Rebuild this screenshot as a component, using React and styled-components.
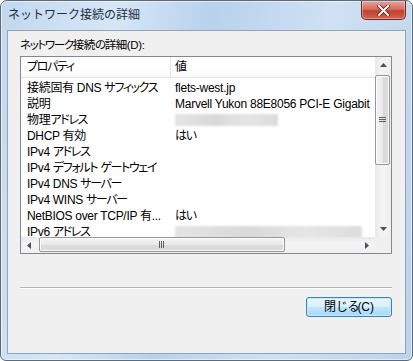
import React from "react";
import styled, { createGlobalStyle } from "styled-components";

const GlobalStyle = createGlobalStyle`
  html, body {
    margin: 0;
    padding: 0;
    background: #ffffff;
  }
  body {
    font-family: "Liberation Sans", "Noto Sans CJK JP", sans-serif;
  }
`;

const Window = styled.div`
  box-sizing: border-box;
  width: 413px;
  height: 361px;
  display: flex;
  flex-direction: column;
  padding: 0 6px 6px 6px;
  border: 1px solid #5b6b7c;
  border-radius: 7px 7px 6px 6px;
  background: linear-gradient(
    100deg,
    #c3d8ee 0%,
    #d6e6f6 25%,
    #b9d1ec 45%,
    #cfe1f3 70%,
    #bcd3ec 100%
  );
  box-shadow: inset 0 0 0 1px rgba(255, 255, 255, 0.55);
`;

const TitleBar = styled.div`
  height: 29px;
  display: flex;
  align-items: flex-start;
  justify-content: space-between;
`;

const Title = styled.div`
  margin: 5px 0 0 1px;
  font-family: "Noto Sans CJK JP", sans-serif;
  font-size: 12px;
  line-height: 16px;
  color: #1d2f45;
`;

const CloseButton = styled.div`
  box-sizing: border-box;
  width: 45px;
  height: 19px;
  display: flex;
  align-items: center;
  justify-content: center;
  border: 1px solid #6e2a28;
  border-top: none;
  border-radius: 0 0 5px 5px;
  background: linear-gradient(180deg, #e3a49b 0%, #d2705f 45%, #c2412f 55%, #d0644f 100%);
  box-shadow: inset 0 0 0 1px rgba(255, 255, 255, 0.35);
`;

const Client = styled.div`
  flex: 1;
  display: flex;
  flex-direction: column;
  background: #f0f0f0;
  border: 1px solid #8fa5bd;
  padding: 6px 13px 0 12px;
`;

const Label = styled.div`
  font-size: 11.5px;
  line-height: 16px;
  letter-spacing: -0.4px;
  color: #000;
`;

// katakana / hiragana runs are narrower in the original UI font
const Kana = styled.span`
  letter-spacing: -1.35px;
  font-feature-settings: "palt";
`;

const ListBox = styled.div`
  box-sizing: border-box;
  margin-top: 3px;
  height: 198px;
  border: 1px solid #828790;
  background: #fff;
  display: grid;
  grid-template-columns: 1fr 16px;
  grid-template-rows: 1fr 16px;
`;

const Content = styled.div`
  overflow: hidden;
`;

const Header = styled.div`
  height: 20px;
  display: grid;
  grid-template-columns: 150px 1fr;
  border-bottom: 1px solid #e5e5e5;
  background: linear-gradient(180deg, #ffffff 0%, #ffffff 60%, #f7f8fa 100%);
`;

const HeaderCell = styled.div`
  font-size: 12px;
  line-height: 20px;
  padding-left: ${(p) => p.$pad}px;
  border-right: ${(p) => (p.$divider ? "1px solid #e3e8ee" : "none")};
  color: #000;
`;

const Rows = styled.div`
  padding-top: 2px;
`;

const Row = styled.div`
  height: 16px;
  display: grid;
  grid-template-columns: 150px 1fr;
  font-size: 12px;
  line-height: 16px;
  color: #000;
`;

const NameCell = styled.div`
  padding: 0 3px 0 6px;
  letter-spacing: -0.3px;
  white-space: nowrap;
  overflow: hidden;
  text-overflow: ellipsis;
`;

const ValueCell = styled.div`
  padding-left: 4px;
  letter-spacing: -0.25px;
  white-space: nowrap;
  overflow: hidden;
  display: flex;
  align-items: center;
`;

const Blur = styled.div`
  width: ${(p) => p.$w}px;
  height: 12px;
  background: linear-gradient(90deg, #e4e4e4, #d9d9d9 40%, #e6e6e6 70%, #dcdcdc);
  filter: blur(1px);
`;

const VScroll = styled.div`
  display: flex;
  flex-direction: column;
  background: linear-gradient(90deg, #e8e8e8 0%, #f4f4f4 40%, #f0f0f0 100%);
`;

const HScroll = styled.div`
  display: flex;
  align-items: stretch;
  background: linear-gradient(180deg, #e8e8e8 0%, #f4f4f4 40%, #f0f0f0 100%);
`;

const Corner = styled.div`
  background: #f0f0f0;
`;

const Arrow = styled.div`
  width: 16px;
  height: 16px;
  flex: none;
  display: flex;
  align-items: center;
  justify-content: center;
`;

const Track = styled.div`
  flex: 1;
  display: flex;
  flex-direction: ${(p) => (p.$vertical ? "column" : "row")};
  padding: ${(p) => (p.$vertical ? "2px 0 0 0" : "0 0 0 2px")};
`;

const Thumb = styled.div`
  box-sizing: border-box;
  ${(p) => (p.$vertical ? `height: ${p.$size}px; width: 15px;` : `width: ${p.$size}px; height: 15px;`)}
  border: 1px solid #979797;
  border-radius: 2px;
  display: flex;
  align-items: center;
  justify-content: center;
  background: ${(p) =>
    p.$vertical
      ? "linear-gradient(90deg, #f3f3f3 0%, #e9e9e9 50%, #d8d8d8 51%, #dcdcdc 100%)"
      : "linear-gradient(180deg, #f3f3f3 0%, #e9e9e9 50%, #d8d8d8 51%, #dcdcdc 100%)"};
  box-shadow: inset 0 0 0 1px rgba(255, 255, 255, 0.8);
`;

const Separator = styled.div`
  margin-top: 33px;
  height: 0;
  border-top: 1px solid #b4b4b4;
  border-bottom: 1px solid #ffffff;
`;

const ButtonRow = styled.div`
  margin-top: 8px;
  display: flex;
  justify-content: flex-end;
`;

const Button = styled.button`
  box-sizing: border-box;
  width: 86px;
  height: 20px;
  padding: 0;
  border: 1px solid #3c7fb1;
  border-radius: 3px;
  font-family: "Liberation Sans", "Noto Sans CJK JP", sans-serif;
  font-size: 12px;
  line-height: 16px;
  color: #000;
  background: linear-gradient(180deg, #eaf6fd 0%, #d9f0fc 50%, #bee6fd 51%, #a7d9f5 100%);
  box-shadow: inset 0 0 0 1px #c6ecfb;
`;

// the NetBIOS name is shown truncated, as the column cuts it in the original
const rows = [
  { name: "接続固有 DNS サフィックス", value: "flets-west.jp" },
  { name: "説明", value: "Marvell Yukon 88E8056 PCI-E Gigabit" },
  { name: "物理アドレス", blur: 103 },
  { name: "DHCP 有効", value: "はい" },
  { name: "IPv4 アドレス" },
  { name: "IPv4 デフォルト ゲートウェイ" },
  { name: "IPv4 DNS サーバー" },
  { name: "IPv4 WINS サーバー" },
  { name: "NetBIOS over TCP/IP 有...", value: "はい" },
  { name: "IPv6 アドレス", blur: 187 },
];

function JText({ text }) {
  const parts = text.split(/([\u3040-\u30ff]+)/);
  return parts.map((p, i) =>
    /[\u3040-\u30ff]/.test(p) ? <Kana key={i}>{p}</Kana> : <React.Fragment key={i}>{p}</React.Fragment>
  );
}

function Tri({ dir }) {
  const pts = {
    up: "0,4 7,4 3.5,0",
    down: "0,0 7,0 3.5,4",
    left: "4,0 4,7 0,3.5",
    right: "0,0 0,7 4,3.5",
  }[dir];
  const vert = dir === "up" || dir === "down";
  return (
    <svg width={vert ? 7 : 4} height={vert ? 4 : 7} viewBox={vert ? "0 0 7 4" : "0 0 4 7"}>
      <polygon points={pts} fill="#4d5056" />
    </svg>
  );
}

function Grip({ vertical }) {
  return vertical ? (
    <svg width="7" height="6" viewBox="0 0 7 6">
      <rect x="0" y="0" width="7" height="1" fill="#5f5f5f" />
      <rect x="0" y="2" width="7" height="1" fill="#5f5f5f" />
      <rect x="0" y="4" width="7" height="1" fill="#5f5f5f" />
    </svg>
  ) : (
    <svg width="6" height="7" viewBox="0 0 6 7">
      <rect x="0" y="0" width="1" height="7" fill="#5f5f5f" />
      <rect x="2" y="0" width="1" height="7" fill="#5f5f5f" />
      <rect x="4" y="0" width="1" height="7" fill="#5f5f5f" />
    </svg>
  );
}

export default function App() {
  return (
    <>
      <GlobalStyle />
      <Window>
        <TitleBar>
          <Title>ネットワーク接続の詳細</Title>
          <CloseButton>
            <svg width="13" height="11" viewBox="0 0 13 11">
              <path
                d="M2 1 L11 10 M11 1 L2 10"
                stroke="#5a1f1a"
                strokeWidth="3.6"
                strokeLinecap="square"
              />
              <path
                d="M2 1 L11 10 M11 1 L2 10"
                stroke="#ffffff"
                strokeWidth="2"
                strokeLinecap="square"
              />
            </svg>
          </CloseButton>
        </TitleBar>
        <Client>
          <Label>
            <JText text="ネットワーク接続の詳細(D):" />
          </Label>
          <ListBox>
            <Content>
              <Header>
                <HeaderCell $pad={6} $divider>
                  <JText text="プロパティ" />
                </HeaderCell>
                <HeaderCell $pad={4}>値</HeaderCell>
              </Header>
              <Rows>
                {rows.map((r) => (
                  <Row key={r.name}>
                    <NameCell>
                      <JText text={r.name} />
                    </NameCell>
                    <ValueCell>
                      {r.blur ? <Blur $w={r.blur} /> : <JText text={r.value || ""} />}
                    </ValueCell>
                  </Row>
                ))}
              </Rows>
            </Content>
            <VScroll>
              <Arrow>
                <Tri dir="up" />
              </Arrow>
              <Track $vertical>
                <Thumb $vertical $size={90}>
                  <Grip vertical />
                </Thumb>
              </Track>
              <Arrow>
                <Tri dir="down" />
              </Arrow>
            </VScroll>
            <HScroll>
              <Arrow>
                <Tri dir="left" />
              </Arrow>
              <Track>
                <Thumb $size={246}>
                  <Grip />
                </Thumb>
              </Track>
              <Arrow>
                <Tri dir="right" />
              </Arrow>
            </HScroll>
            <Corner />
          </ListBox>
          <Separator />
          <ButtonRow>
            <Button>
              閉じ<Kana>る</Kana>(C)
            </Button>
          </ButtonRow>
        </Client>
      </Window>
    </>
  );
}
